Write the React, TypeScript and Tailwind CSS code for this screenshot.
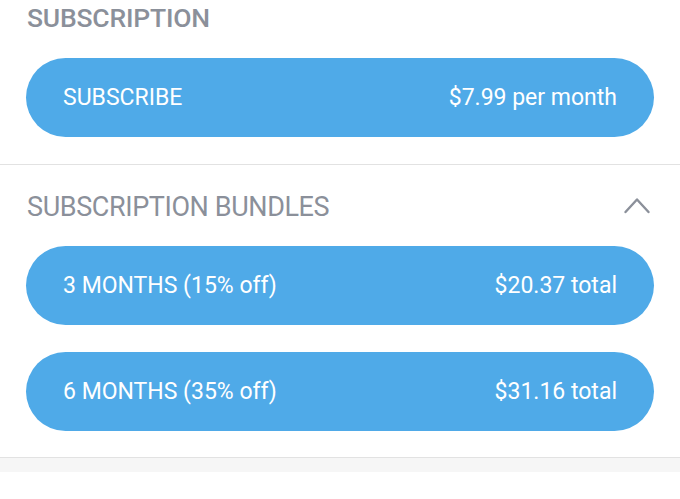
const bundles = [
  { label: '3 MONTHS (15% off)', price: '$20.37 total' },
  { label: '6 MONTHS (35% off)', price: '$31.16 total' },
];

function PlanButton({ label, price }: { label: string; price: string }) {
  return (
    <button className="w-full h-[79px] rounded-full bg-[#4faae8] flex items-center justify-between pl-[37px] pr-[37px] text-white text-[23px] leading-none">
      <span>{label}</span>
      <span>{price}</span>
    </button>
  );
}

export default function App() {
  return (
    <div className="w-[680px] h-[499px] bg-white overflow-hidden font-['Roboto','Liberation_Sans',sans-serif]">
      <section className="px-[26px] pt-[3px] pb-[27px] border-b border-[#e2e2e2]">
        <h2 className="text-[26.5px] leading-[30px] text-[#8b909a] font-medium tracking-[-0.2px] pl-px">SUBSCRIPTION</h2>
        <div className="mt-[25px]">
          <PlanButton label="SUBSCRIBE" price="$7.99 per month" />
        </div>
      </section>

      <section className="px-[26px] pt-[27px] pb-[26px] border-b border-[#e2e2e2]">
        <div className="flex items-center justify-between pl-px">
          <h2 className="text-[27px] leading-[30px] text-[#8b909a] tracking-[-0.4px]">SUBSCRIPTION BUNDLES</h2>
          <svg width="28" height="18" viewBox="0 0 28 18" fill="none" className="mr-[3px] mt-[-2px]">
            <polyline points="2.5,15 14,2.5 25.5,15" stroke="#8b909a" strokeWidth="2.4" strokeLinecap="round" strokeLinejoin="round" />
          </svg>
        </div>
        <div className="mt-[24px] flex flex-col gap-[27px]">
          {bundles.map((b) => (
            <PlanButton key={b.label} label={b.label} price={b.price} />
          ))}
        </div>
      </section>

      <div className="h-[14px] bg-[#f6f6f6]" />
    </div>
  );
}
